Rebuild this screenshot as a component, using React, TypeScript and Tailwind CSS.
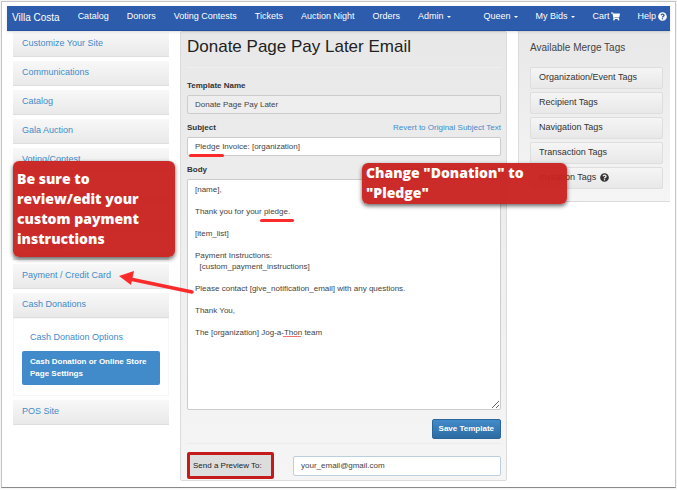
import { FaQuestionCircle, FaShoppingCart } from "react-icons/fa";

const leftNav = ["Catalog", "Donors", "Voting Contests", "Tickets", "Auction Night", "Orders"];

const sideLinks = [
  "Customize Your Site",
  "Communications",
  "Catalog",
  "Gala Auction",
  "Voting/Contest",
  "Online/Mobile",
  "Pages",
  "Ticket Sale",
  "Payment / Credit Card",
  "Cash Donations",
];

const mergeTags = [
  "Organization/Event Tags",
  "Recipient Tags",
  "Navigation Tags",
  "Transaction Tags",
  "Invitation Tags",
];

const bodyText = `[name],

Thank you for your pledge.

[item_list]

Payment Instructions:
  [custom_payment_instructions]

Please contact [give_notification_email] with any questions.

Thank You,

The [organization] Jog-a-Thon team`;

function Caret() {
  return (
    <span className="ml-1 inline-block border-x-2 border-t-2 border-x-transparent border-t-white align-middle" />
  );
}

function SideLink({ label }: { label: string }) {
  return (
    <a
      href="#"
      className="flex h-[25px] shrink-0 items-center border-b border-[#dedede] bg-linear-to-b from-[#f8f8f8] to-[#e9e9e9] px-[9px] text-[#428bca]"
    >
      {label}
    </a>
  );
}

function Navbar() {
  return (
    <nav className="relative z-10 flex h-[25px] items-center justify-between border-b border-[#2450a0] bg-[#2c5cab] pr-[3px] pb-0.5 pl-[5px] whitespace-nowrap text-white shadow-sm">
      <div className="flex items-center gap-[18px]">
        <a href="#" className="text-[10px]">
          Villa Costa
        </a>
        {leftNav.map((item) => (
          <a key={item} href="#">
            {item}
          </a>
        ))}
        <button type="button">
          Admin
          <Caret />
        </button>
      </div>
      <div className="flex items-center gap-[17px]">
        <button type="button">
          Queen
          <Caret />
        </button>
        <button type="button">
          My Bids
          <Caret />
        </button>
        <a href="#" className="flex items-center gap-0.5">
          Cart <FaShoppingCart className="mb-0.5" />
        </a>
        <a href="#" className="flex items-center gap-0.5">
          Help <FaQuestionCircle className="mb-0.5" />
        </a>
      </div>
    </nav>
  );
}

function Sidebar() {
  return (
    <aside className="flex w-[156px] shrink-0 flex-col gap-1 pt-px">
      {sideLinks.map((label) => (
        <SideLink key={label} label={label} />
      ))}
      <div className="-mt-1 border border-[#f7f7f7] px-2 pt-2 pb-[10px]">
        <a href="#" className="block px-2 py-1 leading-3 text-[#428bca]">
          Cash Donation Options
        </a>
        <a
          href="#"
          className="mt-1 block rounded-xs bg-[#428bca] px-2 py-[5px] text-[8px] leading-3 font-bold text-white"
        >
          Cash Donation or Online Store
          <br />
          Page Settings
        </a>
      </div>
      <SideLink label="POS Site" />
    </aside>
  );
}

function TemplateForm() {
  return (
    <main className="min-w-0 flex-1 rounded-xs border border-[#dcdcdc] bg-linear-to-b from-[#e8e8e8] to-[#f5f5f5] pr-[5px] pl-1.5 text-[8px] text-[#444]">
      <h1 className="pt-[3px] text-[17px] leading-6 text-[#222]">Donate Page Pay Later Email</h1>
      <hr className="mt-2 border-[#eee]" />

      <label htmlFor="template-name" className="mt-3 block leading-3 font-bold text-[#333]">
        Template Name
      </label>
      <input
        id="template-name"
        readOnly
        defaultValue="Donate Page Pay Later"
        className="mt-[3px] block h-[19px] w-full rounded-xs border border-[#ccc] bg-[#eee] px-[7px]"
      />

      <div className="mt-2 flex items-center justify-between leading-3">
        <label htmlFor="subject" className="font-bold text-[#333]">
          Subject
        </label>
        <a href="#" className="text-[#428bca]">
          Revert to Original Subject Text
        </a>
      </div>
      <div className="relative mt-[3px]">
        <input
          id="subject"
          defaultValue="Pledge Invoice: [organization]"
          className="block h-[19px] w-full rounded-xs border border-[#ccc] bg-white px-[7px]"
        />
        <span className="absolute top-[17px] left-0.5 h-[3px] w-[35px] rounded-full bg-[#fb2b2b]" />
      </div>

      <div className="mt-2 flex items-center justify-between leading-3">
        <label htmlFor="body" className="font-bold text-[#333]">
          Body
        </label>
        <a href="#" className="text-[#428bca]">
          Revert to Original Body Text
        </a>
      </div>
      <div className="relative mt-[3px]">
        <textarea
          id="body"
          spellCheck={false}
          defaultValue={bodyText}
          className="block h-[231px] w-full rounded-xs border border-[#ccc] bg-white px-[7px] py-1 leading-[11px]"
        />
        <span className="absolute top-[40px] left-[73px] h-[3px] w-[34px] rounded-full bg-[#fb2b2b]" />
        <span className="absolute top-[157px] left-24 h-px w-[18px] bg-[#f07070]" />
      </div>

      <div className="mt-[9px] flex justify-end">
        <button
          type="button"
          className="h-5 rounded-xs border border-[#2b669a] bg-linear-to-b from-[#428bca] to-[#2d6ca2] px-1.5 font-bold text-white"
        >
          Save Template
        </button>
      </div>
      <hr className="mt-1 border-[#ececec]" />

      <div className="mt-2 flex items-center justify-between pb-[1px]">
        <label
          htmlFor="preview-to"
          className="flex h-[27px] w-[87px] items-center rounded-xs border-3 border-[#c41c1c] bg-[#ddd] pl-[3px] text-[#222]"
        >
          Send a Preview To:
        </label>
        <input
          id="preview-to"
          type="email"
          defaultValue="your_email@gmail.com"
          className="h-5 w-[208px] rounded-xs border border-[#bccfe0] bg-white px-[7px]"
        />
      </div>
    </main>
  );
}

function MergeTags() {
  return (
    <section className="w-[152px] shrink-0 self-start border-b border-l border-[#dcdcdc] bg-linear-to-b from-[#e8e8e8] to-[#f5f5f5] pr-[7px] pb-3 pl-[11px]">
      <h2 className="pt-[11px] text-[10px] leading-3 text-[#444]">Available Merge Tags</h2>
      <div className="mt-[13px] flex flex-col gap-[3px]">
        {mergeTags.map((tag) => (
          <button
            key={tag}
            type="button"
            className="flex h-[22px] items-center gap-1 rounded-xs border border-[#dedede] bg-linear-to-b from-[#f5f5f5] to-[#e8e8e8] px-2 text-[#333]"
          >
            {tag}
            {tag === "Invitation Tags" && <FaQuestionCircle className="mb-0.5" />}
          </button>
        ))}
      </div>
    </section>
  );
}

export default function App() {
  return (
    <div className="bg-[#f4f4f4] p-px font-['Liberation_Sans',Arial,sans-serif] text-[9px]">
      <div className="relative border border-[#c4c4c4] border-b-[#8a8a8a] bg-white px-[5px] pt-1 pb-1.5">
        <Navbar />
        <div className="flex gap-[11px] pl-1.5">
          <Sidebar />
          <TemplateForm />
          <MergeTags />
        </div>

        {/* callouts over the page */}
        <div className="absolute top-[159px] left-[11px] w-[162px] rounded-md bg-[#c9211e]/95 px-1 py-2 font-['Open_Sans',sans-serif] text-[14px] leading-5 font-extrabold text-white shadow-[0_2px_4px_#0009]">
          Be sure to
          <br />
          review/edit your
          <br />
          custom payment
          <br />
          instructions
        </div>
        <div className="absolute top-[161px] left-[360px] w-[205px] rounded-md bg-[#c9211e]/95 px-1 pb-px font-['Open_Sans',sans-serif] text-[14px] leading-5 font-extrabold text-white shadow-[0_2px_4px_#0009]">
          Change "Donation" to
          <br />
          "Pledge"
        </div>
        <svg
          className="absolute top-[266px] left-[116px] h-[27px] w-20"
          viewBox="0 0 80 27"
          fill="none"
        >
          <path d="M12 11 74 24" stroke="#fb2b2b" strokeWidth="3.5" strokeLinecap="round" />
          <path d="M1 8 16 3 13 17Z" fill="#fb2b2b" />
        </svg>
      </div>
    </div>
  );
}
